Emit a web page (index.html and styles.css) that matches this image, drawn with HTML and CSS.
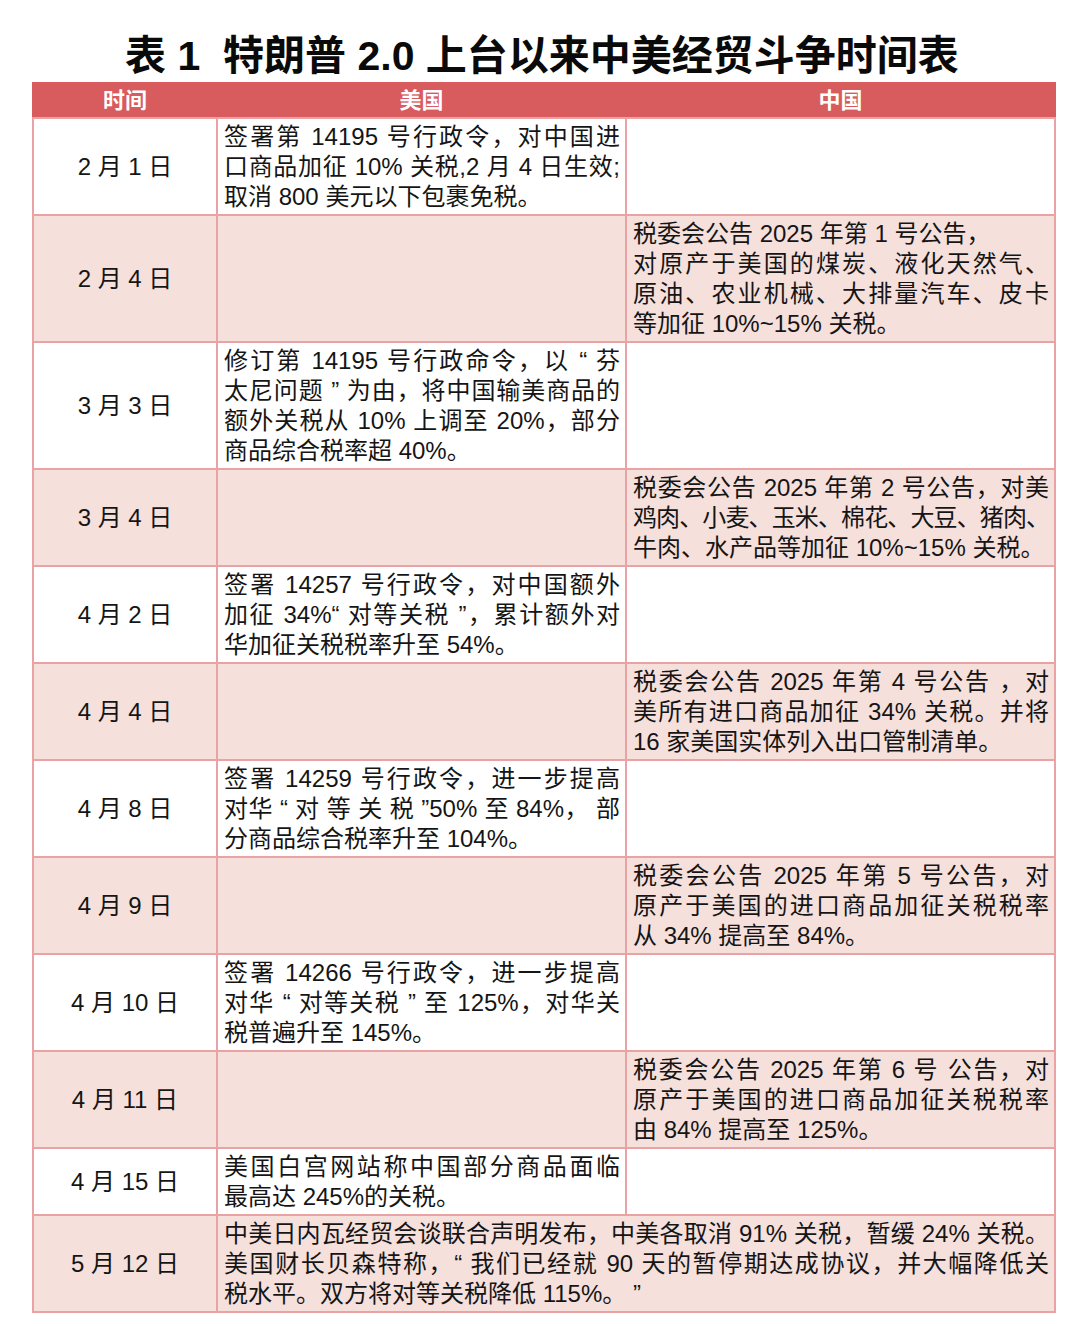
FILE: index.html
```html
<!DOCTYPE html>
<html lang="zh-CN">
<head>
<meta charset="utf-8">
<title>特朗普 2.0 上台以来中美经贸斗争时间表</title>
<link rel="stylesheet" href="styles.css">
</head>
<body>
<h1 class="title">表 1&nbsp;&nbsp;特朗普 2.0 上台以来中美经贸斗争时间表</h1>
<table class="timeline">
  <colgroup>
    <col class="c-date">
    <col class="c-us">
    <col class="c-cn">
  </colgroup>
  <thead>
    <tr><th>时间</th><th>美国</th><th>中国</th></tr>
  </thead>
  <tbody>
    <tr>
      <td class="date">2 月 1 日</td>
      <td><span class="ln">签署第 14195 号行政令，对中国进</span><span class="ln">口商品加征 10% 关税,2 月 4 日生效;</span><span class="end">取消 800 美元以下包裹免税。</span></td>
      <td></td>
    </tr>
    <tr class="alt">
      <td class="date">2 月 4 日</td>
      <td></td>
      <td><span class="end">税委会公告 2025 年第 1 号公告，</span><span class="ln">对原产于美国的煤炭、液化天然气、</span><span class="ln">原油、农业机械、大排量汽车、皮卡</span><span class="end">等加征 10%~15% 关税。</span></td>
    </tr>
    <tr>
      <td class="date">3 月 3 日</td>
      <td><span class="ln">修订第 14195 号行政命令，以 “ 芬</span><span class="ln">太尼问题 ” 为由，将中国输美商品的</span><span class="ln">额外关税从 10% 上调至 20%，部分</span><span class="end">商品综合税率超 40%。</span></td>
      <td></td>
    </tr>
    <tr class="alt">
      <td class="date">3 月 4 日</td>
      <td></td>
      <td><span class="ln">税委会公告 2025 年第 2 号公告，对美</span><span class="ln tight">鸡肉、小麦、玉米、棉花、大豆、猪肉、</span><span class="end">牛肉、水产品等加征 10%~15% 关税。</span></td>
    </tr>
    <tr>
      <td class="date">4 月 2 日</td>
      <td><span class="ln">签署 14257 号行政令，对中国额外</span><span class="ln">加征 34%“ 对等关税 ”，累计额外对</span><span class="end">华加征关税税率升至 54%。</span></td>
      <td></td>
    </tr>
    <tr class="alt">
      <td class="date">4 月 4 日</td>
      <td></td>
      <td><span class="ln">税委会公告 2025 年第 4 号公告 ，对</span><span class="ln">美所有进口商品加征 34% 关税。并将</span><span class="end">16 家美国实体列入出口管制清单。</span></td>
    </tr>
    <tr>
      <td class="date">4 月 8 日</td>
      <td><span class="ln">签署 14259 号行政令，进一步提高</span><span class="ln">对华 “ 对 等 关 税 ”50% 至 84%， 部</span><span class="end">分商品综合税率升至 104%。</span></td>
      <td></td>
    </tr>
    <tr class="alt">
      <td class="date">4 月 9 日</td>
      <td></td>
      <td><span class="ln">税委会公告 2025 年第 5 号公告，对</span><span class="ln">原产于美国的进口商品加征关税税率</span><span class="end">从 34% 提高至 84%。</span></td>
    </tr>
    <tr>
      <td class="date">4 月 10 日</td>
      <td><span class="ln">签署 14266 号行政令，进一步提高</span><span class="ln">对华 “ 对等关税 ” 至 125%，对华关</span><span class="end">税普遍升至 145%。</span></td>
      <td></td>
    </tr>
    <tr class="alt">
      <td class="date">4 月 11 日</td>
      <td></td>
      <td><span class="ln">税委会公告 2025 年第 6 号 公告，对</span><span class="ln">原产于美国的进口商品加征关税税率</span><span class="end">由 84% 提高至 125%。</span></td>
    </tr>
    <tr>
      <td class="date">4 月 15 日</td>
      <td><span class="ln">美国白宫网站称中国部分商品面临</span><span class="end">最高达 245%的关税。</span></td>
      <td></td>
    </tr>
    <tr class="alt">
      <td class="date">5 月 12 日</td>
      <td colspan="2"><span class="ln">中美日内瓦经贸会谈联合声明发布，中美各取消 91% 关税，暂缓 24% 关税。</span><span class="ln">美国财长贝森特称，“ 我们已经就 90 天的暂停期达成协议，并大幅降低关</span><span class="end">税水平。双方将对等关税降低 115%。 ”</span></td>
    </tr>
  </tbody>
</table>
</body>
</html>
```

FILE: styles.css
```css
html, body {
  margin: 0;
  padding: 0;
  background: #ffffff;
}

body {
  font-family: "Liberation Sans", "Noto Sans CJK SC", sans-serif;
  color: #151515;
  width: 1084px;
}

.title {
  margin: 0;
  padding: 32px 0 2px;
  height: 48px;
  line-height: 48px;
  font-size: 41px;
  font-weight: 700;
  text-align: center;
  color: #0a0a0a;
  font-family: "Liberation Sans", "Noto Sans CJK SC", sans-serif;
}

.timeline {
  margin: 0 0 0 32px;
  width: 1022px;
  border-collapse: collapse;
  table-layout: fixed;
  font-size: 24px;
  line-height: 30px;
}

.c-date { width: 184px; }
.c-us { width: 409px; }
.c-cn { width: 429px; }

.timeline th {
  background: #d85b5e;
  color: #ffffff;
  font-size: 22px;
  font-weight: 700;
  height: 33px;
  padding: 0;
  line-height: 33px;
  border: 2px solid #d85b5e;
  border-bottom-color: #e9a3a5;
  text-align: center;
}

.timeline td {
  border: 2px solid #eaa3a5;
  padding: 3px 5px 2px 6px;
  vertical-align: top;
  text-align: left;
}

.timeline tr.alt td {
  background: #f5e0dc;
}

.timeline td.date {
  text-align: center;
  vertical-align: middle;
  padding: 0;
}

.ln {
  display: block;
  text-align: justify;
  text-align-last: justify;
}

.tight {
  letter-spacing: -1px;
}

.end {
  display: block;
  text-align: left;
}
```
